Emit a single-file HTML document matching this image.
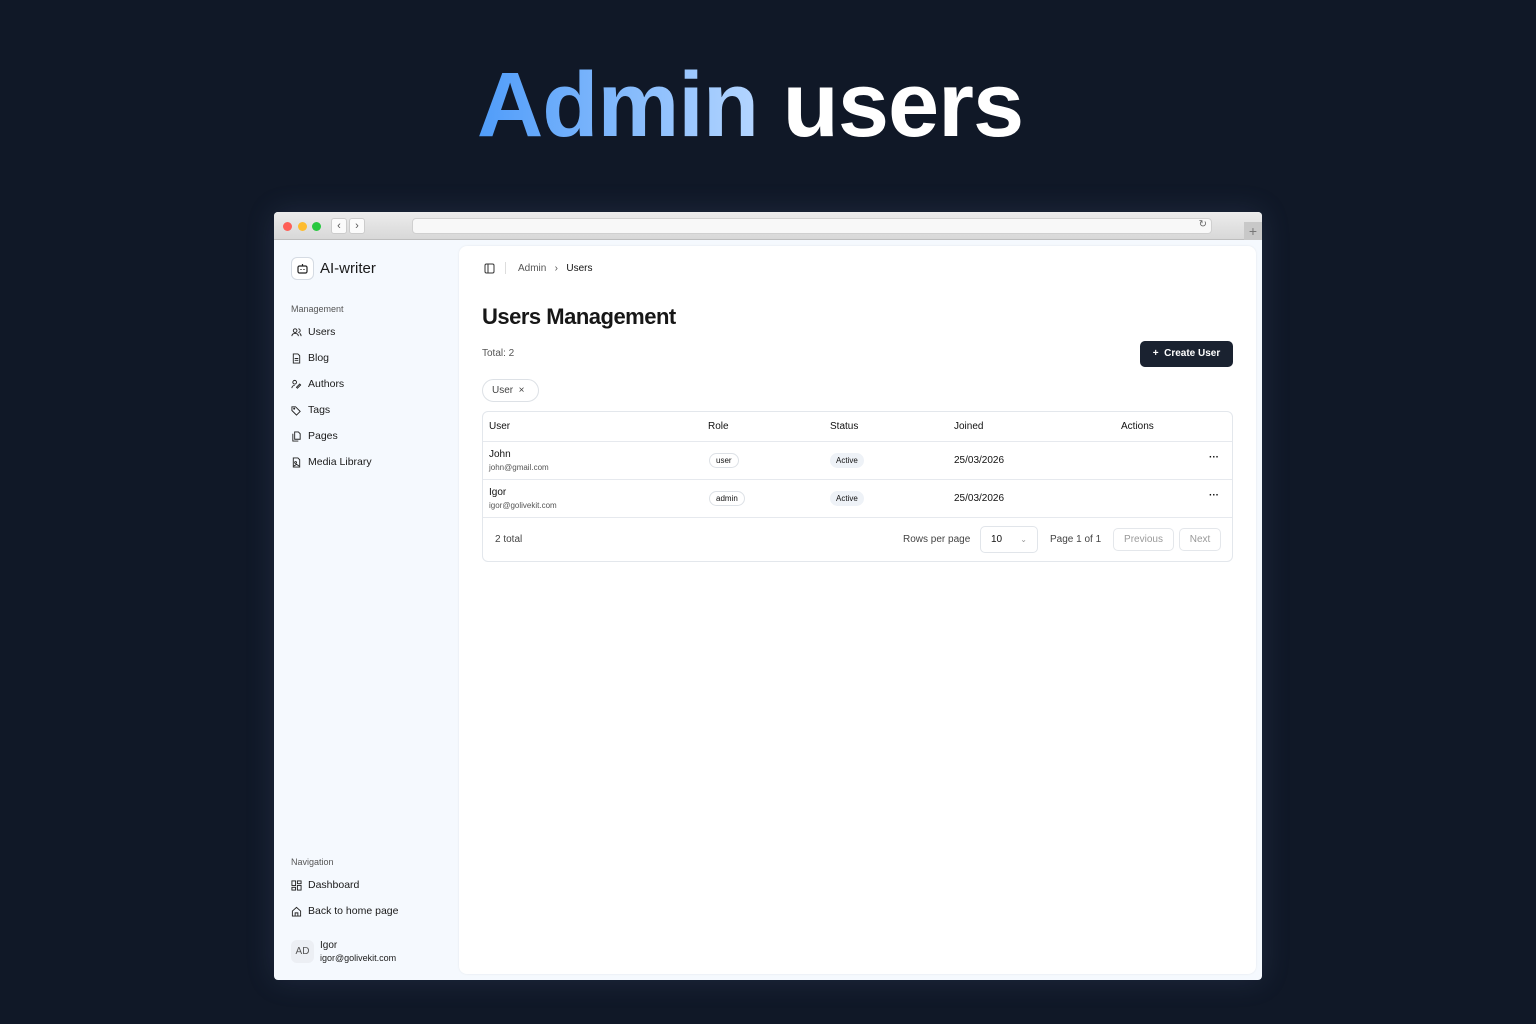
<!DOCTYPE html>
<html><head><meta charset="utf-8"><style>
*{box-sizing:border-box;margin:0;padding:0}
body{width:1536px;height:1024px;background:#101827;font-family:"Liberation Sans",sans-serif;position:relative;overflow:hidden;color:#111}
.title{position:absolute;top:59px;left:-18px;width:1536px;text-align:center;font-size:92px;line-height:1;font-weight:bold;letter-spacing:-1px;color:#fff}
.title .g{background:linear-gradient(90deg,#4f9cf9,#b4d5ff);-webkit-background-clip:text;background-clip:text;color:transparent}
.win{position:absolute;left:274px;top:212px;width:988px;height:768px;background:#f5f9fe;border-radius:4px;overflow:hidden;box-shadow:0 0 30px rgba(120,150,200,.15)}
.bar{height:28px;background:linear-gradient(#ececec,#d8d8d8);border-bottom:1px solid #bdbdbd;position:relative}
.dot{position:absolute;top:10px;width:9px;height:9px;border-radius:50%}
.nav{position:absolute;top:6px;width:16px;height:16px;background:#fbfbfb;border:1px solid #ccc;border-radius:3px;font-size:11px;text-align:center;line-height:14px;color:#555}
.url{position:absolute;left:138px;top:6px;width:800px;height:16px;background:#f8f8f8;border:1px solid #d0d0d0;border-radius:4px}
.side{position:absolute;left:0;top:28px;width:184px;bottom:0;font-size:10.5px;color:#1a1a1a}
.item{position:absolute;left:17px;display:flex;align-items:center;gap:6px}
.item svg{width:11px;height:11px}
.lbl{position:absolute;left:17px;font-size:9px;color:#555}
.main{position:absolute;left:185px;top:34px;width:797px;height:728px;background:#fff;border-radius:8px;box-shadow:0 0 2px rgba(0,0,0,.08)}
.t{position:absolute}
.tbl{position:absolute;left:23px;top:165px;width:751px;height:151px;border:1px solid #e3e7ec;border-radius:6px}
.row{position:absolute;left:0;right:0;border-bottom:1px solid #e6e9ee}
.badge{position:absolute;border:1px solid #dde1e6;border-radius:9px;font-size:8px;padding:2px 6px}
.act{position:absolute;background:#eef2f7;border-radius:9px;font-size:8px;padding:3px 6px}
.btn{position:absolute;border:1px solid #e4e7eb;border-radius:5px;font-size:10px;color:#999;text-align:center}
</style></head><body>
<div class="title"><span class="g">Admin</span> users</div>
<div class="win">
 <div class="bar">
  <div class="dot" style="left:9px;background:#fe5f57"></div>
  <div class="dot" style="left:24px;background:#febc2e"></div>
  <div class="dot" style="left:38px;background:#28c840"></div>
  <div class="nav" style="left:57px">‹</div><div class="nav" style="left:75px">›</div>
  <div class="url"><span style="position:absolute;right:4px;top:0;font-size:10px;color:#666">↻</span></div>
  <div style="position:absolute;right:0;top:10px;width:18px;height:18px;background:#c8c8c8;color:#777;font-size:14px;text-align:center;line-height:18px">+</div>
 </div>
 <div class="side">
  <div style="position:absolute;left:17px;top:17px;width:23px;height:23px;border:1px solid #d5dbe3;border-radius:6px;background:#fff"><svg width="21" height="21" viewBox="0 0 21 21" fill="none" stroke="#222" stroke-width="1.2"><rect x="6" y="8" width="9" height="7" rx="1.5"/><path d="M10.5 8V6M9 11v1M12 11v1"/></svg></div>
  <div class="t" style="left:46px;top:20px;font-size:15px">AI-writer</div>
  <div class="lbl" style="top:64px">Management</div>
  <div class="item" style="top:86px"><svg viewBox="0 0 12 12" fill="none" stroke="#222"><circle cx="4.5" cy="4" r="2"/><path d="M1 10c0-2 1.5-3 3.5-3S8 8 8 10M8 2a2 2 0 010 4M9.5 7c1 .5 1.5 1.5 1.5 3"/></svg>Users</div>
  <div class="item" style="top:112px"><svg viewBox="0 0 12 12" fill="none" stroke="#222"><path d="M2.5 1h5l2 2v8h-7z M4 6h4M4 8h4"/></svg>Blog</div>
  <div class="item" style="top:138px"><svg viewBox="0 0 12 12" fill="none" stroke="#222"><circle cx="4" cy="3.5" r="2"/><path d="M1 10c0-2 1.5-3 3-3M7 10l3.5-3.5-1-1L6 9z"/></svg>Authors</div>
  <div class="item" style="top:164px"><svg viewBox="0 0 12 12" fill="none" stroke="#222"><path d="M1 2v4l5 5 4-4-5-5z"/><circle cx="3.5" cy="4" r=".6"/></svg>Tags</div>
  <div class="item" style="top:190px"><svg viewBox="0 0 12 12" fill="none" stroke="#222"><path d="M4 1h4l2 2v6H4zM2 3v8h6"/></svg>Pages</div>
  <div class="item" style="top:216px"><svg viewBox="0 0 12 12" fill="none" stroke="#222"><path d="M2.5 1h5l2 2v8h-7z"/><circle cx="5" cy="6" r="1"/><path d="M3 10l3-2 3 2"/></svg>Media Library</div>
  <div class="lbl" style="top:617px">Navigation</div>
  <div class="item" style="top:639px"><svg viewBox="0 0 12 12" fill="none" stroke="#222"><rect x="1" y="1" width="4" height="5"/><rect x="7" y="1" width="4" height="3"/><rect x="7" y="6" width="4" height="5"/><rect x="1" y="8" width="4" height="3"/></svg>Dashboard</div>
  <div class="item" style="top:665px"><svg viewBox="0 0 12 12" fill="none" stroke="#222"><path d="M1.5 5.5L6 1.5l4.5 4V11h-9z M4.5 11V7.5h3V11"/></svg>Back to home page</div>
  <div style="position:absolute;left:17px;top:700px;width:23px;height:23px;border-radius:6px;background:#eceff4;font-size:10px;color:#555;text-align:center;line-height:23px">AD</div>
  <div class="t" style="left:46px;top:700px;font-size:10px">Igor</div>
  <div class="t" style="left:46px;top:713px;font-size:9px">igor@golivekit.com</div>
 </div>
 <div class="main">
  <svg class="t" style="left:25px;top:17px" width="11" height="11" viewBox="0 0 11 11" fill="none" stroke="#333"><rect x="1" y="1" width="9" height="9" rx="1.5"/><path d="M4 1v9"/></svg>
  <div class="t" style="left:46px;top:16px;width:1px;height:12px;background:#ddd"></div>
  <div class="t" style="left:59px;top:17px;font-size:10px;color:#555">Admin&nbsp;&nbsp;&nbsp;›&nbsp;&nbsp;&nbsp;<span style="color:#111">Users</span></div>
  <div class="t" style="left:23px;top:58px;font-size:22px;font-weight:bold;letter-spacing:-0.5px;color:#171717">Users Management</div>
  <div class="t" style="left:23px;top:102px;font-size:10px;color:#555">Total: 2</div>
  <div class="t" style="left:681px;top:95px;width:93px;height:26px;background:#1a2230;border-radius:5px;color:#fff;font-size:10px;font-weight:bold;line-height:26px;text-align:center">+&nbsp;&nbsp;Create User</div>
  <div class="t" style="left:23px;top:133px;width:57px;height:23px;border:1px solid #dde1e6;border-radius:12px;font-size:10px;color:#444;line-height:21px;padding-left:9px">User&nbsp;&nbsp;×</div>
  <div class="tbl">
   <div class="row" style="top:0;height:30px"></div>
   <div class="row" style="top:30px;height:38px"></div>
   <div class="row" style="top:68px;height:38px"></div>
   <div class="t" style="left:6px;top:9px;font-size:10px">User</div>
   <div class="t" style="left:225px;top:9px;font-size:10px">Role</div>
   <div class="t" style="left:347px;top:9px;font-size:10px">Status</div>
   <div class="t" style="left:471px;top:9px;font-size:10px">Joined</div>
   <div class="t" style="left:638px;top:9px;font-size:10px">Actions</div>
   <div class="t" style="left:6px;top:37px;font-size:10px">John</div>
   <div class="t" style="left:6px;top:51px;font-size:8px;color:#555">john@gmail.com</div>
   <div class="badge" style="left:226px;top:41px">user</div>
   <div class="act" style="left:347px;top:41px">Active</div>
   <div class="t" style="left:471px;top:43px;font-size:10px">25/03/2026</div>
   <div class="t" style="left:726px;top:40px;font-size:10px;font-weight:bold">···</div>
   <div class="t" style="left:6px;top:75px;font-size:10px">Igor</div>
   <div class="t" style="left:6px;top:89px;font-size:8px;color:#555">igor@golivekit.com</div>
   <div class="badge" style="left:226px;top:79px">admin</div>
   <div class="act" style="left:347px;top:79px">Active</div>
   <div class="t" style="left:471px;top:81px;font-size:10px">25/03/2026</div>
   <div class="t" style="left:726px;top:78px;font-size:10px;font-weight:bold">···</div>
   <div class="t" style="left:12px;top:122px;font-size:10px;color:#444">2 total</div>
   <div class="t" style="left:420px;top:122px;font-size:10px;color:#444">Rows per page</div>
   <div class="t" style="left:497px;top:114px;width:58px;height:27px;border:1px solid #e1e5ea;border-radius:5px;font-size:10px;line-height:25px;padding-left:10px">10<span style="position:absolute;right:10px;color:#999;font-size:8px">⌄</span></div>
   <div class="t" style="left:567px;top:122px;font-size:10px;color:#444">Page 1 of 1</div>
   <div class="btn" style="left:630px;top:116px;width:61px;height:23px;line-height:21px">Previous</div>
   <div class="btn" style="left:696px;top:116px;width:42px;height:23px;line-height:21px">Next</div>
  </div>
 </div>
</div>
</body></html>
